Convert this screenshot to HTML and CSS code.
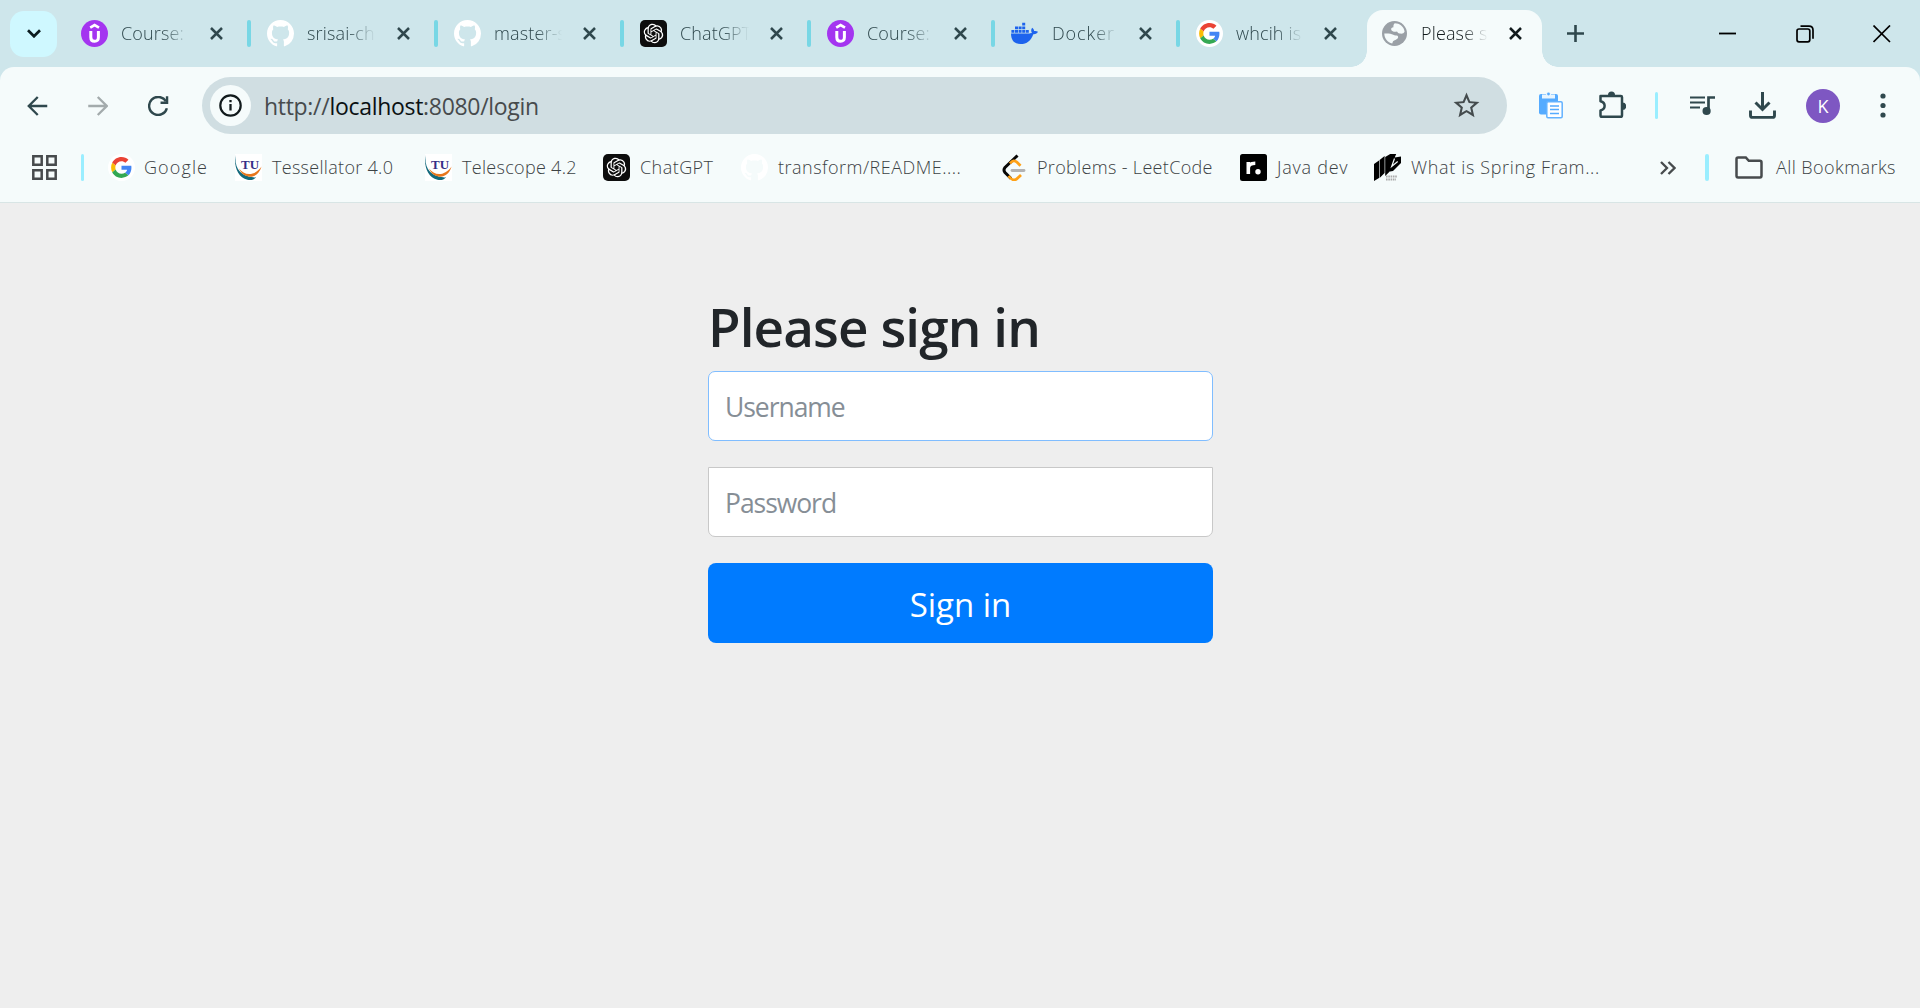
FILE: index.html
```html
<!DOCTYPE html>
<html lang="en">
<head>
<meta charset="utf-8">
<title>Please sign in</title>
<link rel="stylesheet" href="styles.css">
</head>
<body>
<svg class="defs" aria-hidden="true">
  <symbol id="udemy" viewBox="0 0 27 27"><circle cx="13.5" cy="13.5" r="13.5" fill="#a435f0"/><path d="M9.2 7.6l4.4-2.6 4.4 2.6" fill="none" stroke="#fff" stroke-width="2.7"/><path d="M9.8 11v6.3q0 4 3.8 4t3.8-4V11" fill="none" stroke="#fff" stroke-width="3"/></symbol>
  <symbol id="github" viewBox="0 0 16 16"><path fill="#fff" d="M8 0C3.58 0 0 3.58 0 8c0 3.54 2.29 6.53 5.47 7.59.4.07.55-.17.55-.38 0-.19-.01-.82-.01-1.49-2.01.37-2.53-.49-2.69-.94-.09-.23-.48-.94-.82-1.13-.28-.15-.68-.52-.01-.53.63-.01 1.08.58 1.23.82.72 1.21 1.87.87 2.33.66.07-.52.28-.87.51-1.07-1.78-.2-3.64-.89-3.64-3.95 0-.87.31-1.59.82-2.15-.08-.2-.36-1.02.08-2.12 0 0 .67-.21 2.2.82.64-.18 1.32-.27 2-.27s1.36.09 2 .27c1.53-1.04 2.2-.82 2.2-.82.44 1.1.16 1.92.08 2.12.51.56.82 1.27.82 2.15 0 3.07-1.87 3.75-3.65 3.95.29.25.54.73.54 1.48 0 1.07-.01 1.93-.01 2.2 0 .21.15.46.55.38A8.01 8.01 0 0 0 16 8c0-4.42-3.58-8-8-8z"/></symbol>
  <symbol id="gpt" viewBox="0 0 27 27"><rect width="27" height="27" rx="5" fill="#0d0d0d"/><g transform="translate(3.7 3.7) scale(.815)"><path fill="#fff" d="M22.2819 9.8211a5.9847 5.9847 0 0 0-.5157-4.9108 6.0462 6.0462 0 0 0-6.5098-2.9A6.0651 6.0651 0 0 0 4.9807 4.1818a5.9847 5.9847 0 0 0-3.9977 2.9 6.0462 6.0462 0 0 0 .7427 7.0966 5.98 5.98 0 0 0 .511 4.9107 6.051 6.051 0 0 0 6.5146 2.9001A5.9847 5.9847 0 0 0 13.2599 24a6.0557 6.0557 0 0 0 5.7718-4.2058 5.9894 5.9894 0 0 0 3.9977-2.9001 6.0557 6.0557 0 0 0-.7475-7.0729zm-9.022 12.6081a4.4755 4.4755 0 0 1-2.8764-1.0408l.1419-.0804 4.7783-2.7582a.7948.7948 0 0 0 .3927-.6813v-6.7369l2.02 1.1686a.071.071 0 0 1 .038.052v5.5826a4.504 4.504 0 0 1-4.4945 4.4944zm-9.6607-4.1254a4.4708 4.4708 0 0 1-.5346-3.0137l.142.0852 4.783 2.7582a.7712.7712 0 0 0 .7806 0l5.8428-3.3685v2.3324a.0804.0804 0 0 1-.0332.0615L9.74 19.9502a4.4992 4.4992 0 0 1-6.1408-1.6464zM2.3408 7.8956a4.485 4.485 0 0 1 2.3655-1.9728V11.6a.7664.7664 0 0 0 .3879.6765l5.8144 3.3543-2.0201 1.1685a.0757.0757 0 0 1-.071 0l-4.8303-2.7865A4.504 4.504 0 0 1 2.3408 7.872zm16.5963 3.8558L13.1038 8.364 15.1192 7.2a.0757.0757 0 0 1 .071 0l4.8303 2.7913a4.4944 4.4944 0 0 1-.6765 8.1042v-5.6772a.79.79 0 0 0-.407-.667zm2.0107-3.0231l-.142-.0852-4.7735-2.7818a.7759.7759 0 0 0-.7854 0L9.409 9.2297V6.8974a.0662.0662 0 0 1 .0284-.0615l4.8303-2.7866a4.4992 4.4992 0 0 1 6.6802 4.66zM8.3065 12.863l-2.02-1.1638a.0804.0804 0 0 1-.038-.0567V6.0742a4.4992 4.4992 0 0 1 7.3757-3.4537l-.142.0805L8.704 5.459a.7948.7948 0 0 0-.3927.6813zm1.0976-2.3654l2.602-1.4998 2.6069 1.4998v2.9994l-2.5974 1.4997-2.6067-1.4997Z"/></g></symbol>
  <symbol id="google" viewBox="0 0 27 27"><circle cx="13.5" cy="13.5" r="13.5" fill="#fff"/><g transform="translate(3.1 3.1) scale(.433)"><path fill="#EA4335" d="M24 9.5c3.54 0 6.71 1.22 9.21 3.6l6.85-6.85C35.9 2.38 30.47 0 24 0 14.62 0 6.51 5.38 2.56 13.22l7.98 6.19C12.43 13.72 17.74 9.5 24 9.5z"/><path fill="#4285F4" d="M46.98 24.55c0-1.57-.15-3.09-.38-4.55H24v9.02h12.94c-.58 2.96-2.26 5.48-4.78 7.18l7.73 6c4.51-4.18 7.09-10.36 7.09-17.65z"/><path fill="#FBBC05" d="M10.53 28.59A14.5 14.5 0 0 1 9.77 24c0-1.6.27-3.14.76-4.59l-7.98-6.19A23.9 23.9 0 0 0 0 24c0 3.88.92 7.54 2.56 10.78l7.97-6.19z"/><path fill="#34A853" d="M24 48c6.48 0 11.93-2.13 15.89-5.81l-7.73-6c-2.15 1.45-4.92 2.3-8.16 2.3-6.26 0-11.57-4.22-13.47-9.91l-7.98 6.19C6.51 42.62 14.62 48 24 48z"/></g></symbol>
  <symbol id="docker" viewBox="0 0 27 27"><path fill="#1d63ed" d="M0 13.4h18.7c1.1 0 1.7-.2 2.2-.6-1.1-1.8-.9-3.7.3-5.1 1.2.9 1.8 2 1.9 3.3 1.5-.3 2.8 0 3.9.8-.8 1.7-2.3 2.5-4.7 2.4C20 20.800 15.900 24 9.600 24 3.300 24 .1 20.100 0 13.400z"/><path fill="#1d63ed" d="M.4 10h3v2.700h-3zM4 10h3v2.700H4zM7.600 10h3v2.700h-3zM11.200 10h3v2.700h-3zM14.800 10h3v2.700h-3zM4 6.400h3v2.800H4zM7.600 6.400h3v2.800h-3zM11.200 6.400h3v2.800h-3zM11.200 2.700h3v2.800h-3z"/></symbol>
  <symbol id="globe" viewBox="0 0 24 24"><circle cx="12" cy="12" r="12" fill="#9aa0a6"/><path fill="#f5fbfb" d="M12.300 2.200C16.800 2.200 21 5.400 21.700 10c-.7 1.700-2.300 2.500-4.700 2-1.500-.3-2.200-1.100-2.600-1.900-2.800.5-4.600-.1-5.500-1.500-.5-1.600.6-2.200 2.100-2.500-.2-1.500.1-3 1.300-3.900zM2.200 12c3.700-.2 6.700.1 8.600 1.300 1 .7 2 .7 3.200.6 1.400.2 1.900 1.300 1.200 2.600-1.600 1.500-3.200 1.800-4.600 3l-.8 2.200C5.500 20.700 2.200 16.700 2.200 12z"/></symbol>
  <symbol id="x" viewBox="0 0 13 13"><path d="M1 1l11 11M12 1L1 12" fill="none" stroke="currentColor" stroke-width="2.500"/></symbol>
  <symbol id="tu" viewBox="0 0 27 27"><rect width="27" height="27" fill="#fff"/><path fill="#12697c" d="M.6 1C-.6 14 5 23.500 21 23.200c-2 2.500-5 3.200-8.500 2.600C2.500 23.500-1.500 11.500.6 1z"/><path fill="#fff" d="M2 8c2 9.500 8.500 15 18 15.500L24 18 4 6z"/><path fill="#e8761c" d="M4 14.500c5 6.500 14.500 9 22.600-2-2.600 8.300-8 11-13.300 10C8.500 21.500 5.500 18.500 4 14.500z"/><text x="6" y="15" font-family="Liberation Serif, serif" font-weight="700" font-size="13.500" textLength="18" lengthAdjust="spacingAndGlyphs" fill="#352f87">TU</text></symbol>
</svg>

<header class="tabstrip">
  <button class="tab-search"><svg width="14" height="9" viewBox="0 0 14 9"><path d="M1 1.300l6 6 6-6" fill="none" stroke="#0b1c1f" stroke-width="2.700"/></svg></button>
  <div class="tabs">
    <div class="tab"><svg class="fav"><use href="#udemy"/></svg><span class="label">Course:</span><svg class="close"><use href="#x"/></svg><i class="sep"></i></div>
    <div class="tab"><svg class="fav"><use href="#github"/></svg><span class="label">srisai-ch</span><svg class="close"><use href="#x"/></svg><i class="sep"></i></div>
    <div class="tab"><svg class="fav"><use href="#github"/></svg><span class="label">master-s</span><svg class="close"><use href="#x"/></svg><i class="sep"></i></div>
    <div class="tab"><svg class="fav"><use href="#gpt"/></svg><span class="label">ChatGPT</span><svg class="close"><use href="#x"/></svg><i class="sep"></i></div>
    <div class="tab"><svg class="fav"><use href="#udemy"/></svg><span class="label">Course:</span><svg class="close"><use href="#x"/></svg><i class="sep"></i></div>
    <div class="tab"><svg class="fav"><use href="#docker"/></svg><span class="label wide">Docker</span><svg class="close"><use href="#x"/></svg><i class="sep"></i></div>
    <div class="tab last"><svg class="fav"><use href="#google"/></svg><span class="label">whcih is</span><svg class="close"><use href="#x"/></svg></div>
    <div class="tab active"><svg class="fav globe"><use href="#globe"/></svg><span class="label">Please s</span><svg class="close"><use href="#x"/></svg></div>
  </div>
  <svg class="new-tab" width="17" height="17" viewBox="0 0 17 17"><path d="M8.500 0v17M0 8.500h17" stroke="#2f484d" stroke-width="2.600"/></svg>
  <div class="window-controls">
    <svg width="18" height="18" viewBox="0 0 18 18"><path d="M0 8.500h17" stroke="#000" stroke-width="1.800"/></svg>
    <svg width="18" height="18" viewBox="0 0 18 18"><g fill="none" stroke="#000" stroke-width="1.700"><rect x="1" y="4" width="12.800" height="12.800" rx="2"/><path d="M4.500 1.200h8.500q4 0 4 4v8.500"/></g></svg>
    <svg width="18" height="18" viewBox="0 0 18 18"><path d="M.5.5l16.500 16.500M17 .5L.5 17" stroke="#000" stroke-width="1.700"/></svg>
  </div>
</header>

<section class="chrome">
  <div class="toolbar">
    <nav class="nav">
      <svg viewBox="0 0 20 20"><path d="M20 10H1.500M10.500 1L1.500 10l9 9" fill="none" stroke="#2f484d" stroke-width="2.300"/></svg>
      <svg viewBox="0 0 20 20"><path d="M0 10h18.500M9.500 1l9 9-9 9" fill="none" stroke="#a3abac" stroke-width="2.300"/></svg>
      <svg viewBox="0 0 20 20"><path d="M18.600 12.200A9 9 0 1 1 17.600 5.300" fill="none" stroke="#2f484d" stroke-width="2.400"/><path d="M18.800.3v6.500h-6.500" fill="none" stroke="#2f484d" stroke-width="2.400"/></svg>
    </nav>
    <div class="omnibox">
      <span class="info"><svg width="23" height="23" viewBox="0 0 23 23"><circle cx="11.500" cy="11.500" r="10.200" fill="none" stroke="#111a1c" stroke-width="2.200"/><path d="M11.500 10v6.500M11.500 6v2.300" stroke="#111a1c" stroke-width="2.300"/></svg></span>
      <span class="url">http://<b>localhost</b>:8080/login</span>
      <svg class="star" viewBox="0 0 24 24"><path fill="#444b4d" d="M22 9.240l-7.190-.620L12 2 9.190 8.630 2 9.240l5.460 4.730L5.820 21 12 17.270 18.180 21l-1.630-7.030L22 9.240zM12 15.400l-3.760 2.270 1-4.280-3.320-2.880 4.380-.380L12 6.100l1.710 4.040 4.380.380-3.320 2.880 1 4.280L12 15.400z"/></svg>
    </div>
    <div class="actions">
      <svg width="24" height="27" viewBox="0 0 24 27"><rect y="2" width="19" height="20.500" rx="2" fill="#55abff"/><path d="M3 2.500h4V1h5v1.500h4v4H3z" fill="#e8f5ff"/><circle cx="9.500" cy="2" r="1.400" fill="#55abff"/><rect x="7.800" y="9.800" width="15.400" height="16" rx="1.200" fill="#fff" stroke="#63b2ff" stroke-width="1.500"/><path d="M11 14h9M11 17.500h9M11 21.500h9" stroke="#55abff" stroke-width="1.500"/></svg>
      <svg class="puzzle" width="27" height="28" viewBox="0 0 27 28"><path d="M1.500 5h20.300q1.200 0 1.200 1.200v18q0 1.600-1.600 1.600H3.100q-1.600 0-1.600-1.600v-4.700c5.500-1.300 5.500-8 0-9.300z" fill="none" stroke="#2f484d" stroke-width="2.500" stroke-linejoin="round"/><path d="M9 4a3.500 3.500 0 0 1 7 0zM23.500 11.500a3.700 3.700 0 0 1 0 7.400z" fill="#2f484d"/></svg>
      <i class="divider thin"></i>
      <svg width="26" height="20" viewBox="0 0 26 20"><path d="M0 1.500h15M0 6.500h15M0 11.500h10" stroke="#2f484d" stroke-width="2.200"/><path d="M18.500 15V1.500H25" fill="none" stroke="#2f484d" stroke-width="2.700"/><circle cx="16.600" cy="15" r="4.100" fill="#2f484d"/></svg>
      <svg width="27" height="27" viewBox="0 0 27 27"><path d="M13.500 0v16.500M6.500 10.500l7 7 7-7" fill="none" stroke="#2f484d" stroke-width="3"/><path d="M1.500 18.500v5q0 1.900 1.900 1.900h20.200q1.900 0 1.900-1.900v-5" fill="none" stroke="#2f484d" stroke-width="2.900"/></svg>
      <span class="avatar">K</span>
      <svg width="6" height="25" viewBox="0 0 6 25"><g fill="#2f484d"><circle cx="3" cy="3" r="2.600"/><circle cx="3" cy="12.500" r="2.600"/><circle cx="3" cy="22" r="2.600"/></g></svg>
    </div>
  </div>

  <div class="bookmarks">
    <svg class="apps" width="25" height="25" viewBox="0 0 25 25"><path d="M1.300 1.300h8.400v8.400H1.300zM15.300 1.300h8.400v8.400h-8.400zM1.300 15.300h8.400v8.400H1.300zM15.300 15.300h8.400v8.400h-8.400z" fill="none" stroke="#474b4d" stroke-width="2.500"/></svg>
    <i class="divider thin"></i>
    <div class="marks">
      <a class="mark"><svg class="fav"><use href="#google"/></svg><span class="m1">Google</span></a>
      <a class="mark"><svg class="fav"><use href="#tu"/></svg><span class="m2">Tessellator 4.0</span></a>
      <a class="mark"><svg class="fav"><use href="#tu"/></svg><span class="m3">Telescope 4.2</span></a>
      <a class="mark"><svg class="fav"><use href="#gpt"/></svg><span class="m4">ChatGPT</span></a>
      <a class="mark"><svg class="fav"><use href="#github"/></svg><span class="m5">transform/README....</span></a>
      <a class="mark"><svg class="fav" viewBox="0 0 27 27"><path d="M15.500 1.500L3 13.500q-2 2.500 0 5l6 6" fill="none" stroke="#070706" stroke-width="3"/><path d="M8 9.500q3.500-4.500 7-1.200l3.500 3.500M6.500 22q5 6.500 9 2.200l3.500-3.200" fill="none" stroke="#ffa116" stroke-width="2.800"/><path d="M10 16.500h12" stroke="#b3b3b3" stroke-width="2.800" stroke-linecap="round"/></svg><span class="m6">Problems - LeetCode</span></a>
      <a class="mark"><svg class="fav" viewBox="0 0 27 27"><rect width="27" height="27" rx="2.500"/><path d="M8.300 20V8M8.300 14q0-4.800 7-4.800" fill="none" stroke="#fff" stroke-width="3.600"/><circle cx="18" cy="17.800" r="2.700" fill="#fff"/></svg><span class="m7">Java dev</span></a>
      <a class="mark"><svg class="fav" viewBox="0 0 27 27"><path d="M0 10l5-3.500V24l-5 3zM5.600 6l5-4v17l-5 5zM11.200 3l5-3v17l-5 5zM16.200 0h6l-1.500 3.500 6.300-1v6.500l-8 8-3 .5z"/><path d="M20.500 4.500l-2.800 8 6-5" fill="none" stroke="#f5fbfb" stroke-width="1.200"/><path d="M12 22.500h11M12 25.500h10" stroke="#aaa" stroke-width="1.800" stroke-dasharray="1.600 .7"/></svg><span class="m8">What is Spring Fram...</span></a>
    </div>
    <svg class="more" width="16" height="14" viewBox="0 0 16 14"><path d="M1 1l6 6-6 6M8.500 1l6 6-6 6" fill="none" stroke="#474b4d" stroke-width="2.300"/></svg>
    <i class="divider"></i>
    <a class="mark all"><svg width="28" height="23" viewBox="0 0 28 23"><path d="M1.500 3q0-1.600 1.600-1.600h7.700l3 3.400h11.100q1.600 0 1.600 1.600v13.400q0 1.700-1.600 1.700H3.100q-1.600 0-1.600-1.700z" fill="none" stroke="#474b4d" stroke-width="2.500"/></svg><span class="m9">All Bookmarks</span></a>
  </div>
</section>

<main class="page">
  <form class="signin">
    <h2>Please sign in</h2>
    <input class="field focused" type="text" placeholder="Username">
    <input class="field password" type="password" placeholder="Password">
    <button class="submit" type="button">Sign in</button>
  </form>
</main>
</body>
</html>
```
FILE: styles.css
```css
* { box-sizing: border-box; }
body {
  margin: 0;
  height: 1008px;
  display: flex;
  flex-direction: column;
  overflow: hidden;
  background: #eee;
  font-family: "Open Sans", "Noto Sans", sans-serif;
}
svg { display: block; flex: none; }
.defs { display: none; }
button { border: 0; padding: 0; font: inherit; }

/* Tab strip */
.tabstrip {
  height: 67px;
  flex: none;
  display: flex;
  align-items: center;
  padding-left: 10px;
  background: #cee6eb;
}
.tab-search {
  width: 47px;
  height: 46px;
  border-radius: 14px;
  background: #cff8ff;
  display: grid;
  place-items: center;
}
.tabs {
  display: grid;
  grid-template-columns: 186px 187px 186px 187px 184px 185px 171px 175px;
  height: 67px;
  margin-left: 24px;
}
.tab { display: flex; align-items: center; color: #2f484d; }
.fav { width: 27px; height: 27px; margin-right: 13px; }
.label {
  flex: 1;
  min-width: 0;
  overflow: hidden;
  white-space: nowrap;
  font-size: 18px;
  font-weight: 300;
  letter-spacing: .15px;
  line-height: 28px;
  padding-bottom: 1px;
  margin-right: 18px;
  -webkit-mask-image: linear-gradient(90deg, #000 58%, transparent 96%);
  mask-image: linear-gradient(90deg, #000 58%, transparent 96%);
}
.label.wide { letter-spacing: .9px; margin-left: 1px; }
.close { width: 13px; height: 13px; }
.sep {
  width: 4px;
  height: 27px;
  border-radius: 2px;
  background: #78d7e5;
  margin: 0 16px 0 24px;
}
.tab.last { padding-right: 30px; }
.tab.active {
  position: relative;
  margin-top: 10px;
  padding: 0 20.5px 10px 15px;
  border-radius: 16px 16px 0 0;
  background: #f5fbfb;
  color: #111a1c;
}
.tab.active::before,
.tab.active::after {
  content: "";
  position: absolute;
  bottom: 0;
  width: 16px;
  height: 16px;
}
.tab.active::before { left: -16px; background: radial-gradient(circle at 0 0, transparent 15.5px, #f5fbfb 16px); }
.tab.active::after { right: -16px; background: radial-gradient(circle at 100% 0, transparent 15.5px, #f5fbfb 16px); }
.fav.globe { width: 25px; height: 25px; margin-right: 14px; }
.new-tab { margin-left: 25px; }
.window-controls { display: flex; gap: 59px; margin-left: 135px; }

/* Toolbar */
.chrome {
  height: 136px;
  flex: none;
  background: #f5fbfb;
  border-bottom: 1px solid #d8e5e5;
  border-radius: 14px 14px 0 0;
  padding-top: 10px;
}
body::before {
  content: "";
  position: absolute;
  inset: 0 0 auto;
  height: 90px;
  background: #cee6eb;
  z-index: -1;
}
.toolbar { display: flex; height: 57px; align-items: center; padding-left: 27px; }
.nav { display: flex; gap: 40px; width: 175px; }
.nav svg { width: 20.500px; height: 20px; }
.omnibox {
  width: 1305px;
  height: 57px;
  border-radius: 29px;
  background: #d0dee2;
  display: flex;
  align-items: center;
  padding-left: 8px;
}
.info {
  width: 41px;
  height: 41px;
  border-radius: 50%;
  background: #f5fbfb;
  display: grid;
  place-items: center;
}
.url {
  flex: 1;
  margin-left: 13px;
  font-size: 23px;
  letter-spacing: -.3px;
  color: #474b4d;
}
.url b { font-weight: 400; color: #0b1113; }
.star { width: 31px; height: 31px; margin-right: 25px; }
.actions {
  flex: 1;
  display: grid;
  grid-template-columns: 60px 56px 35px 59px 57px 74px 6px;
  align-items: center;
  margin-left: 32px;
}
.puzzle { margin-bottom: 2px; }
.divider { width: 4px; height: 27px; border-radius: 2px; background: #9aeeff; flex: none; }
.divider.thin { width: 3px; }
.avatar {
  width: 34px;
  height: 34px;
  border-radius: 50%;
  background: #7e57c2;
  color: #fff;
  font-size: 18px;
  line-height: 34px;
  text-align: center;
}

/* Bookmarks */
.bookmarks { display: flex; align-items: center; height: 67px; padding-left: 32px; }
.bookmarks > .thin { margin: 0 24px; }
.marks { display: grid; grid-template-columns: 127px 190px 178px 138px 261px 238px 134px 286px; }
.mark {
  display: flex;
  align-items: center;
  white-space: nowrap;
  font-size: 18px;
  font-weight: 300;
  color: #3c4244;
}
.mark span { padding-bottom: 2px; }
.mark .fav { margin-right: 10px; }
.m1 { letter-spacing: 1.1px; margin-left: -1px; }
.m2, .m3 { letter-spacing: .3px; }
.m4 { letter-spacing: .45px; }
.m5 { letter-spacing: .5px; }
.m6 { letter-spacing: .33px; margin-left: -2px; }
.m7 { letter-spacing: .75px; }
.m8 { letter-spacing: .65px; }
.m9 { letter-spacing: .43px; }
.more { margin-right: 29px; }
.mark.all { margin-left: 26px; gap: 13px; }

/* Sign-in page */
.page { flex: 1; display: flex; justify-content: center; padding-top: 90px; }
.signin { width: 505px; margin-left: 1px; display: flex; flex-direction: column; gap: 26px; }
.signin h2 {
  margin: 0 0 -15px;
  font-size: 53px;
  line-height: 67px;
  font-weight: 600;
  letter-spacing: -.9px;
  color: #212529;
  white-space: nowrap;
}
.field {
  height: 70px;
  border: 1px solid #c8c8c8;
  border-radius: 7px;
  background: #fff;
  padding: 1px 16px 0;
  font: 400 26.5px "Open Sans", "Noto Sans", sans-serif;
  letter-spacing: -1.05px;
  outline: 0;
}
.field::placeholder { color: #868e96; opacity: 1; }
.field.focused { border-color: #80bdff; }
.field.password { border-radius: 0 0 7px 7px; }
.submit {
  height: 80px;
  border-radius: 8px;
  background: #007bff;
  color: #fff;
  font-size: 33px;
  padding-top: 3px;
}
```
